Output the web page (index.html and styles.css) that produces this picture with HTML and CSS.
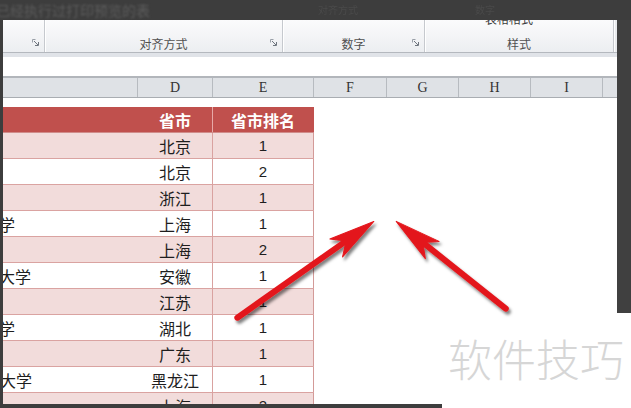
FILE: index.html
```html
<!DOCTYPE html>
<html lang="zh">
<head>
<meta charset="utf-8">
<title>Excel 表格</title>
<link rel="stylesheet" href="styles.css">
</head>
<body>
<div class="screen">
  <div class="topbar">
    <span class="ghost-title">已经执行过打印预览的表</span>
    <span class="ghost g1">对齐方式</span>
    <span class="ghost g2">数字</span>
  </div>
  <div class="main">
    <div class="lstrip"></div>
    <div class="excel">
      <div class="ribbon">
        <div class="grp ga">
          <div class="grp-foot">
            <svg class="launch" viewBox="0 0 7 7"><path d="M0.5 3.5V0.5H3.5" fill="none" stroke="#9aa0a8"/><path d="M2 2L6 6M6.5 3V6.5H3" fill="none" stroke="#6f767f"/></svg>
          </div>
        </div>
        <div class="grp gb">
          <div class="grp-foot">
            <span class="lbl">对齐方式</span>
            <svg class="launch" viewBox="0 0 7 7"><path d="M0.5 3.5V0.5H3.5" fill="none" stroke="#9aa0a8"/><path d="M2 2L6 6M6.5 3V6.5H3" fill="none" stroke="#6f767f"/></svg>
          </div>
        </div>
        <div class="grp gc">
          <div class="grp-foot">
            <span class="lbl">数字</span>
            <svg class="launch" viewBox="0 0 7 7"><path d="M0.5 3.5V0.5H3.5" fill="none" stroke="#9aa0a8"/><path d="M2 2L6 6M6.5 3V6.5H3" fill="none" stroke="#6f767f"/></svg>
          </div>
        </div>
        <div class="grp gd">
          <span class="btn-cap">表格格式</span>
          <div class="grp-foot">
            <span class="lbl">样式</span>
          </div>
        </div>
        <div class="redge"></div>
      </div>
      <div class="rfoot"></div>
      <div class="fbar"></div>
      <div class="colhdr">
        <div class="ch"></div>
        <div class="ch">D</div>
        <div class="ch">E</div>
        <div class="ch">F</div>
        <div class="ch">G</div>
        <div class="ch">H</div>
        <div class="ch">I</div>
        <div class="ch last"></div>
      </div>
      <div class="sheet">
        <div class="pad"></div>
        <div class="tr hd"><div class="c"></div><div class="d">省市</div><div class="e">省市排名</div></div>
        <div class="tr pk"><div class="c"></div><div class="d">北京</div><div class="e num">1</div></div>
        <div class="tr wt"><div class="c"></div><div class="d">北京</div><div class="e num">2</div></div>
        <div class="tr pk"><div class="c"></div><div class="d">浙江</div><div class="e num">1</div></div>
        <div class="tr wt"><div class="c"><span class="tail">学</span></div><div class="d">上海</div><div class="e num">1</div></div>
        <div class="tr pk"><div class="c"></div><div class="d">上海</div><div class="e num">2</div></div>
        <div class="tr wt"><div class="c"><span class="tail">大学</span></div><div class="d">安徽</div><div class="e num">1</div></div>
        <div class="tr pk"><div class="c"></div><div class="d">江苏</div><div class="e num">1</div></div>
        <div class="tr wt"><div class="c"><span class="tail">学</span></div><div class="d">湖北</div><div class="e num">1</div></div>
        <div class="tr pk"><div class="c"></div><div class="d">广东</div><div class="e num">1</div></div>
        <div class="tr wt"><div class="c"><span class="tail t2">大学</span></div><div class="d">黑龙江</div><div class="e num">1</div></div>
        <div class="tr pk"><div class="c"></div><div class="d">上海</div><div class="e num">2</div></div>
      </div>
    </div>
    <div class="rstrip"></div>
  </div>

  <svg class="arrows" width="631" height="408" viewBox="0 0 631 408">
    <defs>
      <filter id="sh" x="-20%" y="-20%" width="140%" height="140%">
        <feDropShadow dx="2" dy="3" stdDeviation="1.8" flood-color="#000" flood-opacity="0.5"/>
      </filter>
    </defs>
    <g filter="url(#sh)" fill="#e3181c" stroke="#e3181c">
      <g transform="translate(373,222) rotate(-35.2)">
        <line x1="-166" y1="0" x2="-34" y2="0" stroke-width="6" stroke-linecap="round"/>
        <polygon points="1,0 -45,-11 -33,0 -45,11" stroke-width="1" stroke-linejoin="round"/>
      </g>
      <g transform="translate(397,222) rotate(-141.5)">
        <line x1="-139" y1="0" x2="-34" y2="0" stroke-width="6" stroke-linecap="round"/>
        <polygon points="1,0 -45,-11 -33,0 -45,11" stroke-width="1" stroke-linejoin="round"/>
      </g>
    </g>
  </svg>

  <div class="watermark">软件技巧</div>
  <div class="bottombar"></div>
</div>
</body>
</html>
```

FILE: styles.css
```css
* {
  box-sizing: border-box;
  margin: 0;
  padding: 0;
}

html, body {
  margin: 0;
  width: 631px;
  height: 408px;
  overflow: hidden;
  background: #ffffff;
  font-family: "Noto Sans CJK SC", "Noto Sans", sans-serif;
}

.screen {
  position: relative;
  width: 631px;
  height: 408px;
  overflow: hidden;
  background: #ffffff;
  display: flex;
  flex-direction: column;
}

/* dark top strip with blurred window title */
.topbar {
  flex: none;
  height: 20px;
  background: #3d3d3d;
  display: flex;
  align-items: center;
  overflow: hidden;
  white-space: nowrap;
}

.ghost-title {
  margin-left: -4px;
  font-size: 14px;
  line-height: 20px;
  color: #5c5c5c;
  filter: blur(0.9px);
}

.ghost {
  font-size: 10px;
  line-height: 20px;
  color: #4a4a4a;
  filter: blur(0.7px);
}

.g1 { margin-left: 168px; }
.g2 { margin-left: 117px; }

.main {
  flex: 1;
  min-height: 0;
  display: flex;
}

.lstrip {
  flex: none;
  width: 3px;
  background: #3d3d3d;
}

.rstrip {
  flex: none;
  width: 14px;
  height: 293px;
  background: #404040;
}

.excel {
  flex: none;
  width: 614px;
  display: flex;
  flex-direction: column;
  overflow: hidden;
}

/* ribbon */
.ribbon {
  flex: none;
  height: 33px;
  display: flex;
  background: linear-gradient(#fbfbfc, #eceef1);
  border-bottom: 1px solid #b4b8be;
}

.grp {
  display: flex;
  flex-direction: column;
  overflow: hidden;
  border-right: 1px solid #c6c9ce;
  box-shadow: 1px 0 0 #ffffff;
}

.ga { width: 42px; }
.gb { width: 238px; }
.gc { width: 142px; }
.gd { width: 189px; }

.redge {
  flex: 1;
  background: #e9ebee;
  border-left: 1px solid #fdfdfd;
}

.grp-foot {
  margin-top: auto;
  height: 16px;
  display: grid;
  grid-template-columns: 1fr auto 1fr;
  align-items: center;
}

.lbl {
  grid-column: 2;
  font-size: 12px;
  line-height: 16px;
  color: #505050;
  white-space: nowrap;
}

.launch {
  grid-column: 3;
  justify-self: end;
  align-self: start;
  margin-top: 3px;
  margin-right: 5px;
  width: 7px;
  height: 7px;
  display: block;
}

.btn-cap {
  align-self: center;
  margin-top: -8px;
  margin-right: 20px;
  font-size: 12px;
  line-height: 14px;
  color: #3c3c3c;
  white-space: nowrap;
}

.rfoot {
  flex: none;
  height: 4px;
  background: #e0e3e8;
}

.fbar {
  flex: none;
  height: 19px;
  background: #ffffff;
}

/* column letters */
.colhdr {
  flex: none;
  height: 22px;
  display: grid;
  grid-template-columns: 135px 75px 101px 73px 72px 72px 72px 14px;
  background: #dfe2e6;
  border-top: 2px solid #b2b6bb;
  border-bottom: 1px solid #a9adb2;
}

.ch {
  border-right: 1px solid #b7bbc0;
  display: flex;
  align-items: center;
  justify-content: center;
  font-family: "Liberation Serif", "DejaVu Serif", serif;
  font-size: 14px;
  color: #333333;
}

.ch.last { border-right: none; }

/* sheet */
.sheet {
  flex: 1;
  display: flex;
  flex-direction: column;
  background: #ffffff;
}

.pad {
  flex: none;
  height: 9px;
}

.tr {
  flex: none;
  width: 311px;
  height: 26px;
  display: grid;
  grid-template-columns: 135px 75px 101px;
  border-bottom: 1px solid #daa3a1;
  font-size: 16px;
  color: #1e1e1e;
}

.tr > div {
  display: flex;
  align-items: center;
  justify-content: center;
  white-space: nowrap;
  overflow: hidden;
}

.tr .c { justify-content: flex-start; }

.tr .d { border-right: 1px solid #d9a2a0; }
.tr .e { border-right: 1px solid #d39a98; }

.hd {
  background: #c0504d;
  color: #ffffff;
  font-weight: bold;
  border-bottom-color: #d08c8a;
}

.hd .d { border-right-color: #e7a9a7; }
.hd .e { border-right-color: #c0504d; }

.pk { background: #f2dcdb; }
.wt { background: #ffffff; }

.num {
  font-family: "Liberation Sans", Arial, sans-serif;
  font-size: 15px;
}

.tail {
  margin-left: -4px;
}

.t2 { margin-left: -3px; }

/* overlays */
.arrows {
  position: absolute;
  left: 0;
  top: 0;
  pointer-events: none;
}

.watermark {
  position: absolute;
  left: 448px;
  top: 334px;
  font-size: 44px;
  line-height: 48px;
  color: #d6d6d6;
  font-weight: 300;
  white-space: nowrap;
}

.bottombar {
  position: absolute;
  left: 0;
  top: 404px;
  width: 442px;
  height: 4px;
  background: #3d3d3d;
}
```
